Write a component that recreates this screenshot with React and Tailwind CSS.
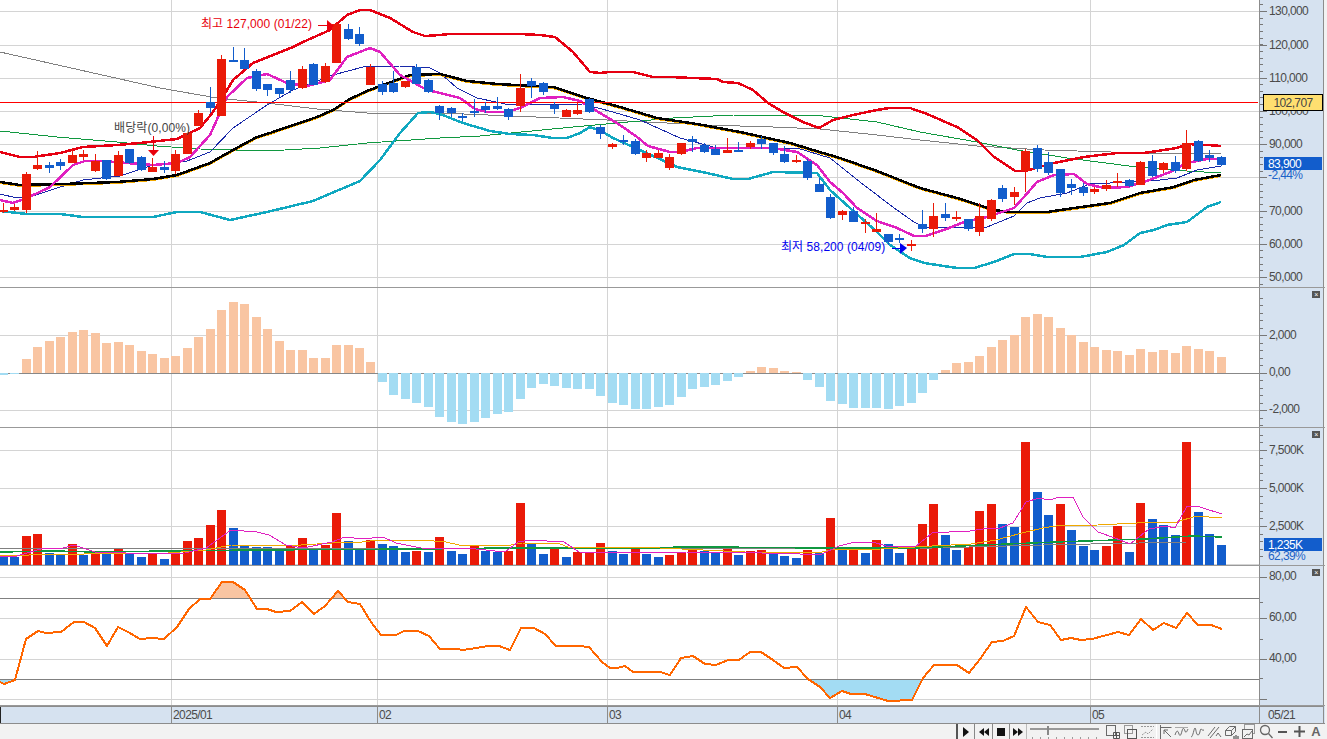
import React from "react";

const COL_X = (i) => 3.3 + 11.49 * i;
const RED = "#ea1a08";
const BLUE = "#125dcc";
const MONTH_X = [171, 377, 607, 837, 1090];

// [wickTop, bodyTop, bodyBottom, wickBottom, colour]
const CANDLES = [
  [203,210,212,213,"r"],[204,207,210,211,"r"],[172,174,210,213,"r"],[151,165,169,170,"r"],[162,165,168,173,"b"],
  [159,162,166,170,"b"],[148,155,163,163,"r"],[150,154,157,160,"r"],[154,161,171,172,"r"],[160,160,179,180,"b"],
  [151,155,176,176,"r"],[149,149,163,164,"b"],[156,157,170,171,"b"],[158,167,172,172,"r"],[161,167,170,173,"b"],
  [150,154,171,174,"r"],[133,133,154,154,"r"],[110,113,126,126,"r"],[87,102,108,113,"b"],[55,59,116,116,"r"],
  [47,60,62,62,"b"],[48,60,69,69,"b"],[69,71,89,91,"b"],[84,84,90,96,"b"],[88,88,94,97,"b"],
  [71,80,90,93,"b"],[66,69,88,89,"r"],[63,64,85,85,"b"],[63,66,82,83,"r"],[22,24,63,63,"r"],
  [24,29,39,40,"b"],[27,34,44,46,"b"],[64,67,85,85,"r"],[81,84,92,95,"b"],[71,83,92,93,"b"],
  [81,81,87,88,"r"],[64,67,84,84,"b"],[79,80,92,93,"b"],[105,106,113,120,"b"],[107,108,113,117,"b"],
  [113,116,117,121,"b"],[99,111,113,117,"b"],[102,106,110,113,"b"],[97,106,109,110,"b"],[108,109,117,120,"b"],
  [74,88,106,112,"r"],[78,81,86,98,"b"],[82,83,92,95,"b"],[102,105,109,114,"b"],[109,110,117,117,"r"],
  [103,110,114,115,"r"],[98,99,112,113,"b"],[125,127,134,139,"b"],[143,144,147,149,"r"],[135,140,142,145,"b"],
  [139,141,154,155,"b"],[150,153,158,162,"r"],[150,153,158,158,"r"],[154,157,168,170,"r"],[143,143,154,155,"r"],
  [136,139,142,152,"b"],[143,145,152,153,"b"],[145,149,155,155,"b"],[138,150,153,153,"r"],[142,150,151,152,"b"],
  [141,143,147,149,"r"],[136,139,144,149,"b"],[143,143,153,155,"b"],[146,154,162,163,"b"],[155,160,161,163,"r"],
  [159,161,178,180,"b"],[178,184,192,192,"b"],[194,197,218,219,"b"],[210,211,215,220,"r"],[207,211,222,222,"b"],
  [219,222,223,233,"r"],[213,229,232,232,"r"],[234,234,242,245,"b"],[234,238,240,243,"b"],[240,244,245,251,"r"],
  [210,224,229,233,"b"],[203,216,229,237,"r"],[203,214,218,221,"b"],[211,217,219,221,"r"],[219,219,229,231,"b"],
  [203,216,232,236,"r"],[199,200,219,221,"r"],[185,188,199,202,"b"],[187,192,197,205,"r"],[149,151,171,192,"r"],
  [145,148,169,172,"b"],[152,162,173,175,"b"],[169,169,193,197,"b"],[179,184,188,195,"b"],[183,187,193,196,"b"],
  [187,189,192,194,"r"],[180,185,189,191,"r"],[173,181,182,187,"r"],[179,180,186,187,"b"],[161,162,185,185,"r"],
  [155,161,176,177,"b"],[162,163,170,173,"r"],[156,162,171,173,"b"],[130,143,169,171,"r"],[140,141,161,162,"b"],
  [150,155,158,162,"b"],[156,157,165,166,"b"],
];

const UPPER_BAND = [[0,152],[20,157],[33,157],[60,153],[83,147],[117,145],[140,143],[177,139],[200,128],[213,112],[227,90],[233,80],[253,63],[293,47],[303,42],[330,30],[347,15],[360,10],[370,10],[390,18],[413,32],[425,36],[440,35],[450,34],[483,34],[520,34],[540,35],[555,37],[573,52],[590,72],[600,73],[610,72],[633,72],[653,77],[670,77],[693,78],[717,79],[723,82],[738,83],[753,90],[768,103],[783,112],[803,122],[819,128],[833,120],[853,115],[877,110],[889,108],[910,108],[927,114],[957,127],[977,140],[994,157],[1015,171],[1025,171],[1054,163],[1084,157],[1117,153],[1144,153],[1177,148],[1187,144],[1207,145],[1221,146]];
const LOWER_BAND = [[0,211],[27,214],[60,214],[83,217],[153,217],[177,212],[200,212],[230,220],[267,212],[313,201],[360,181],[380,160],[400,133],[418,113],[430,112],[440,114],[463,123],[490,131],[510,134],[533,135],[553,138],[567,138],[580,133],[590,127],[603,132],[613,138],[640,150],[677,167],[707,173],[733,179],[748,179],[773,172],[817,173],[830,190],[850,208],[877,232],[890,245],[910,258],[924,263],[957,268],[974,268],[994,262],[1014,254],[1030,254],[1047,257],[1080,257],[1107,252],[1124,245],[1140,233],[1154,230],[1167,225],[1187,222],[1207,207],[1221,202]];
const MA5 = [[0,200],[13,203],[27,198],[50,187],[73,165],[85,161],[103,161],[127,163],[153,165],[177,163],[190,157],[210,135],[227,97],[247,78],[267,74],[287,83],[307,86],[330,80],[347,57],[370,48],[380,52],[400,75],[427,90],[440,93],[460,98],[475,109],[487,112],[507,112],[520,108],[540,98],[563,97],[580,101],[600,113],[620,125],[637,137],[648,146],[670,152],[680,152],[697,148],[773,148],[797,152],[817,165],[830,182],[843,193],[857,208],[877,221],[897,228],[914,236],[925,236],[944,230],[964,222],[987,217],[1014,208],[1024,197],[1037,182],[1054,175],[1074,174],[1087,184],[1104,188],[1127,187],[1144,182],[1170,172],[1187,163],[1207,159],[1221,159]];
const MA60 = [[0,182],[20,185],[63,184],[117,182],[153,179],[177,175],[210,163],[233,150],[257,137],[270,133],[317,117],[333,110],[350,99],[367,91],[383,85],[410,75],[440,74],[467,81],[497,84],[553,87],[587,98],[620,107],[657,118],[697,124],[740,132],[790,143],[813,150],[840,158],[877,171],[920,188],[957,198],[994,210],[1010,212],[1047,212],[1074,208],[1110,203],[1140,193],[1174,187],[1194,180],[1221,175]];
const MA20 = [[0,194],[17,198],[30,197],[57,188],[83,180],[120,176],[153,165],[187,161],[210,152],[233,128],[267,105],[293,90],[333,75],[363,67],[400,66],[430,68],[440,73],[457,88],[477,98],[510,105],[583,104],[613,112],[640,120],[680,138],[717,148],[797,148],[830,158],[860,182],[877,195],[897,210],[914,222],[924,227],[987,227],[1014,216],[1027,203],[1040,198],[1067,193],[1090,184],[1130,182],[1160,180],[1177,178],[1197,170],[1221,166]];
const MA120 = [[0,131],[57,137],[117,142],[157,146],[200,149],[267,151],[320,148],[367,143],[440,138],[480,136],[573,127],[673,118],[733,115],[823,116],[877,122],[920,132],[977,142],[1017,150],[1067,158],[1137,167],[1187,171],[1221,173]];
const MA240 = [[0,52],[160,88],[217,98],[267,103],[317,109],[367,113],[440,113],[607,120],[707,125],[773,127],[820,129],[877,135],[920,140],[977,146],[1044,150],[1144,153],[1221,153]];

// histogram bar ends, page y
const MACD = [375,374,359,347,341,337,332,330,333,343,342,345,351,354,358,356,348,337,329,310,302,304,317,329,341,350,350,358,358,345,345,348,362,382,395,399,403,407,417,422,424,422,418,414,412,399,388,384,386,388,389,389,396,403,405,409,409,407,405,397,389,387,385,381,377,371,367,368,371,372,380,387,401,404,408,408,408,409,406,403,393,380,370,363,362,356,347,340,335,317,314,317,328,335,342,347,350,351,355,349,352,350,353,346,349,351,357];

// volume bar tops in page y, colour by candle day
const VOL = [[557,"b"],[557,"b"],[536,"r"],[534,"r"],[553,"b"],[555,"b"],[544,"r"],[555,"b"],[553,"r"],[553,"b"],[549,"r"],[553,"b"],[557,"b"],[554,"r"],[559,"b"],[553,"r"],[541,"r"],[538,"r"],[525,"r"],[510,"r"],[528,"b"],[546,"b"],[547,"b"],[547,"b"],[550,"b"],[546,"r"],[538,"r"],[550,"b"],[545,"r"],[513,"r"],[541,"b"],[550,"b"],[540,"r"],[544,"b"],[546,"b"],[552,"b"],[551,"r"],[552,"b"],[537,"r"],[551,"b"],[554,"b"],[546,"r"],[551,"b"],[552,"b"],[551,"r"],[503,"r"],[543,"b"],[554,"b"],[548,"r"],[557,"b"],[552,"r"],[552,"r"],[543,"r"],[551,"b"],[554,"b"],[549,"r"],[554,"b"],[557,"b"],[555,"r"],[553,"r"],[550,"r"],[551,"b"],[552,"b"],[548,"r"],[555,"b"],[551,"r"],[550,"r"],[554,"b"],[556,"b"],[558,"b"],[550,"r"],[553,"b"],[518,"r"],[548,"b"],[547,"r"],[553,"b"],[540,"r"],[544,"b"],[553,"b"],[546,"r"],[524,"r"],[504,"r"],[535,"b"],[550,"b"],[547,"r"],[511,"r"],[504,"r"],[524,"b"],[527,"b"],[442,"r"],[492,"b"],[515,"b"],[504,"r"],[530,"b"],[546,"b"],[550,"b"],[546,"r"],[526,"r"],[552,"b"],[503,"r"],[519,"b"],[525,"b"],[535,"b"],[442,"r"],[512,"b"],[534,"b"],[545,"b"]];

const VOL_MA5 = [[0,556],[17,556],[44,548],[63,548],[74,545],[95,552],[126,553],[152,554],[185,553],[206,548],[231,530],[257,532],[269,535],[286,545],[303,548],[332,542],[345,537],[362,539],[383,537],[396,543],[421,548],[476,549],[505,552],[518,542],[530,540],[564,542],[579,552],[660,553],[686,552],[762,553],[800,554],[822,554],[839,546],[851,543],[873,542],[886,546],[915,547],[932,533],[949,532],[970,531],[983,529],[1000,528],[1013,523],[1026,502],[1039,498],[1049,500],[1060,497],[1073,497],[1083,517],[1098,532],[1115,538],[1130,544],[1149,529],[1166,526],[1175,528],[1187,506],[1200,507],[1222,514]];
const VOL_MA20 = [[0,555],[17,556],[42,554],[84,554],[135,553],[168,553],[206,550],[231,545],[286,546],[332,543],[362,542],[379,540],[421,540],[446,542],[459,545],[511,545],[522,543],[560,544],[568,547],[660,548],[745,552],[822,552],[830,550],[881,549],[932,546],[971,544],[996,540],[1022,533],[1043,528],[1056,526],[1098,525],[1137,523],[1149,522],[1177,522],[1196,516],[1222,518]];
const VOL_MA60 = [[0,552],[55,551],[93,552],[168,551],[253,550],[421,549],[505,548],[660,548],[677,547],[711,547],[822,548],[915,548],[983,545],[1056,542],[1145,539],[1192,536],[1222,537]];
const VOL_MA120 = [[0,548],[168,549],[421,548],[660,548],[830,549],[932,548],[1043,545],[1187,542],[1222,542]];

const RSI = [[0,682],[4,684],[15,680],[26,639],[38,631],[46,633],[61,632],[74,622],[84,622],[95,628],[107,646],[118,627],[128,632],[140,639],[152,638],[164,639],[177,627],[189,609],[200,599],[210,599],[222,582],[233,582],[245,590],[257,609],[267,609],[276,612],[290,611],[302,602],[314,614],[325,606],[338,591],[348,602],[360,604],[371,622],[381,635],[396,635],[404,631],[418,631],[429,636],[440,649],[457,649],[463,650],[476,648],[488,646],[499,646],[510,650],[521,628],[534,628],[545,634],[556,646],[579,646],[589,647],[602,662],[610,668],[617,668],[625,666],[633,672],[660,672],[670,675],[681,658],[693,656],[705,664],[716,665],[728,660],[739,660],[750,652],[761,652],[773,660],[784,668],[797,667],[808,679],[820,687],[830,698],[842,691],[851,694],[865,694],[888,701],[912,700],[923,678],[934,665],[957,665],[969,673],[980,659],[992,642],[1003,641],[1014,636],[1026,607],[1038,622],[1050,625],[1061,640],[1071,638],[1081,640],[1092,639],[1107,635],[1118,632],[1129,635],[1141,619],[1153,630],[1164,623],[1176,628],[1187,613],[1198,625],[1211,625],[1222,629]];

const toPts = (a) => a.map((p) => p.join(",")).join(" ");

function Line({ pts, color, width = 1, dy = 0 }) {
  return (
    <polyline
      points={toPts(pts.map(([x, y]) => [x, y + dy]))}
      fill="none"
      stroke={color}
      strokeWidth={width}
      strokeLinejoin="round"
      shapeRendering="crispEdges"
    />
  );
}

function Grid({ top, height, rows }) {
  return (
    <g shapeRendering="crispEdges">
      {rows.map((y) => (
        <rect key={y} x={0} y={y} width={1259} height={1} fill="#d4d4d4" />
      ))}
      {MONTH_X.map((x) => (
        <rect key={x} x={x} y={top} width={1} height={height} fill="#d4d4d4" />
      ))}
    </g>
  );
}

function CloseBox() {
  return (
    <div className="absolute right-[3px] top-[3px] flex h-[7px] w-[8px] items-center justify-center bg-[#555] text-[7px] leading-none text-white">
      ×
    </div>
  );
}

function AxisLabel({ y, color = "text-[#4a4a4a]", children }) {
  return (
    <span
      className={`absolute left-[9px] leading-[14px] whitespace-nowrap ${color}`}
      style={{ top: y - 7 }}
    >
      {children}
    </span>
  );
}

function Pane({ top, height, rows, close, ticks, labels, children, overlay, axisExtra }) {
  return (
    <div className="flex border-b border-[#999]" style={{ height: height + 1 }}>
      <div className="relative w-[1259px] overflow-hidden bg-white">
        <svg width="1259" height={height} viewBox={`0 ${top} 1259 ${height}`} className="block">
          <Grid top={top} height={height} rows={rows} />
          {children}
        </svg>
        {overlay}
      </div>
      <div className="relative w-[65px] overflow-hidden border-x border-x-[#8c8c8c] bg-[#d6e2f0] text-[12px] tracking-[-0.6px]">
        <svg width="10" height={height} viewBox={`0 ${top} 10 ${height}`} className="absolute left-0 top-0" shapeRendering="crispEdges">
          {ticks.map(([y, major]) => (
            <rect key={y} x={0} y={y} width={major ? 7 : 3} height={1} fill="#777" />
          ))}
        </svg>
        {labels.map(([y, text]) => (
          <AxisLabel key={text} y={y - top}>{text}</AxisLabel>
        ))}
        {close && <CloseBox />}
        {axisExtra}
      </div>
    </div>
  );
}

function makeTicks(majors, step, count, from, to) {
  const out = [];
  const start = majors[0];
  for (let y = start - step * count; y < to; y += step) {
    if (y < from) continue;
    out.push([Math.round(y), false]);
  }
  return out.concat(majors.map((y) => [y, true]));
}

function PriceChart() {
  const ticks = makeTicks([11, 45, 78, 111, 144, 177, 211, 244, 277], 6.65, 1, 0, 287);
  const labels = [[11,"130,000"],[45,"120,000"],[78,"110,000"],[111,"100,000"],[144,"90,000"],[211,"70,000"],[244,"60,000"],[277,"50,000"]];
  return (
    <Pane
      top={0}
      height={287}
      rows={[11, 45, 78, 111, 144, 177, 211, 244, 277]}
      ticks={ticks}
      labels={labels}
      overlay={
        <>
          <span className="absolute left-[201px] top-[17px] text-[12px] leading-[14px] tracking-[0.05px] text-[#e8000b] whitespace-nowrap">최고 127,000 (01/22)</span>
          <span className="absolute left-[114px] top-[121px] text-[12px] leading-[14px] tracking-[0.1px] text-[#444] whitespace-nowrap">배당락(0,00%)</span>
          <span className="absolute left-[781px] top-[240px] text-[12px] leading-[14px] tracking-[0.05px] text-[#0000f0] whitespace-nowrap">최저 58,200 (04/09)</span>
        </>
      }
      axisExtra={
        <>
          <div className="absolute left-[3px] top-[94px] flex h-[17px] w-[60px] items-center justify-center border border-black bg-[#ffdf70] text-[#444]">102,707</div>
          <div className="absolute left-[4px] top-[157px] flex h-[13px] w-[58px] items-center bg-[#125dcc] pl-[4px] text-white">83,900</div>
          <span className="absolute left-[8px] top-[168px] leading-[14px] text-[#1c62c8]">-2,44%</span>
        </>
      }
    >
      <Line pts={MA240} color="#808080" />
      <Line pts={MA120} color="#109840" />
      <Line pts={MA20} color="#1828a8" />
      <Line pts={MA60} color="#f0a800" width={2} dy={1} />
      <Line pts={MA60} color="#000000" width={2.5} />
      <Line pts={LOWER_BAND} color="#10a8c0" width={2.5} />
      <Line pts={UPPER_BAND} color="#e60012" width={2.5} />
      <Line pts={MA5} color="#e020c0" width={2.5} />
      <rect x={0} y={102} width={1258} height={1} fill="#ff0000" shapeRendering="crispEdges" />
      <g shapeRendering="crispEdges">
        {CANDLES.map(([hi, top, bot, lo, c], i) => {
          const left = Math.round(COL_X(i) - 4.5);
          const fill = c === "r" ? RED : BLUE;
          return (
            <g key={i} fill={fill}>
              <rect x={left + 4} y={hi} width={1} height={lo - hi} />
              <rect x={left} y={top} width={9} height={Math.max(2, bot - top)} />
            </g>
          );
        })}
      </g>
      {/* high / ex-dividend / low markers */}
      <path d="M318 25.5H328" stroke="#e8000b" />
      <polygon points="327,20 334,26 327,31" fill="#e8000b" />
      <path d="M153.5 136V150" stroke="#e8000b" />
      <polygon points="148,150 159,150 153.5,156" fill="#e8000b" />
      <path d="M892 248.5H901" stroke="#0000f0" />
      <polygon points="900,243 907,248 900,254" fill="#0000f0" />
    </Pane>
  );
}

function MacdChart() {
  const top = 288;
  const zero = 373;
  return (
    <Pane
      top={top}
      height={139}
      rows={[335, 410]}
      close
      ticks={makeTicks([335, 373, 410], 7.5, 5, top + 1, 426)}
      labels={[[335,"2,000"],[372,"0,00"],[409,"-2,000"]]}
    >
      <rect x={0} y={zero} width={1259} height={1} fill="#888" shapeRendering="crispEdges" />
      <g shapeRendering="crispEdges">
        {MACD.map((y, i) => {
          const left = Math.round(COL_X(i) - 4.5);
          const up = y < zero;
          return (
            <rect key={i} x={left} y={up ? y : zero} width={9} height={Math.abs(zero - y)} fill={up ? "#f9c5a2" : "#a3dcf3"} />
          );
        })}
      </g>
    </Pane>
  );
}

function VolumeChart() {
  const top = 428;
  return (
    <Pane
      top={top}
      height={137}
      rows={[450, 488, 526, 564]}
      close
      ticks={makeTicks([450, 488, 526], 7.6, 2, top + 1, 562)}
      labels={[[450,"7,500K"],[488,"5,000K"],[526,"2,500K"]]}
      axisExtra={
        <>
          <div className="absolute left-[4px] top-[110px] flex h-[13px] w-[58px] items-center bg-[#125dcc] pl-[4px] text-white">1,235K</div>
          <span className="absolute left-[8px] top-[121px] leading-[14px] text-[#1c62c8]">62,39%</span>
        </>
      }
    >
      <g shapeRendering="crispEdges">
        {VOL.map(([y, c], i) => (
          <rect key={i} x={Math.round(COL_X(i) - 4.5)} y={y} width={9} height={565 - y} fill={c === "r" ? RED : BLUE} />
        ))}
      </g>
      <Line pts={VOL_MA120} color="#808080" />
      <Line pts={VOL_MA60} color="#109840" width={1.5} />
      <Line pts={VOL_MA20} color="#f0a800" />
      <Line pts={VOL_MA5} color="#e020c0" />
    </Pane>
  );
}

function RsiChart() {
  const top = 566;
  const closed = (y) => toPts([[RSI[0][0], y], ...RSI, [RSI[RSI.length - 1][0], y]]);
  return (
    <Pane
      top={top}
      height={139}
      rows={[577, 618, 659, 699]}
      close
      ticks={[[577,true],[618,true],[659,true],[699,true],[602,false],[639,false],[678,false]]}
      labels={[[576,"80,00"],[617,"60,00"],[658,"40,00"]]}
    >
      <defs>
        <clipPath id="over"><rect x="0" y="566" width="1259" height="32" /></clipPath>
        <clipPath id="under"><rect x="0" y="680" width="1259" height="25" /></clipPath>
      </defs>
      <polygon points={closed(598)} fill="#f9c5a2" clipPath="url(#over)" />
      <polygon points={closed(679)} fill="#a3dcf3" clipPath="url(#under)" />
      <g shapeRendering="crispEdges">
        <rect x={0} y={598} width={1259} height={1} fill="#808080" />
        <rect x={0} y={679} width={1259} height={1} fill="#808080" />
      </g>
      <Line pts={RSI} color="#ff6600" width={2} />
    </Pane>
  );
}

function TimeAxis() {
  const months = [[171, "2025/01"], [377, "02"], [607, "03"], [837, "04"], [1090, "05"]];
  return (
    <div className="flex h-[18px] border-b border-[#8c8c8c] bg-[#d6e2f0] text-[12px] tracking-[-0.6px] text-[#4a4a4a]">
      <div className="relative w-[1259px] border-t border-[#8c8c8c]">
        <div className="absolute left-0 top-0 h-full w-px bg-[#222]" />
        {months.map(([x, label]) => (
          <span key={x} className="absolute top-0 h-full border-l border-[#8c8c8c] pl-[1px] leading-[16px]" style={{ left: x }}>
            {label}
          </span>
        ))}
      </div>
      <div className="w-[65px] border-x border-t border-[#8c8c8c] pl-[8px] leading-[16px]">05/21</div>
    </div>
  );
}

function Tb({ w, children, className = "" }) {
  return (
    <div className={`flex h-full shrink-0 items-center justify-center ${className}`} style={{ width: w }}>
      {children}
    </div>
  );
}

function Toolbar() {
  const s = { fill: "none", stroke: "#6a6a6a", strokeWidth: 1 };
  return (
    <div className="flex h-[15px] justify-end overflow-hidden bg-[#f2f2f2] pr-[3px]">
      <Tb w={18} className="border-l-2 border-[#555]">
        <svg width="8" height="10"><polygon points="1,0 7,5 1,10" fill="#111" /></svg>
      </Tb>
      <Tb w={18} className="border-l border-[#888]">
        <svg width="10" height="10"><polygon points="5,1 0,5 5,9" fill="#111" /><polygon points="10,1 5,5 10,9" fill="#111" /></svg>
      </Tb>
      <Tb w={17} className="border-l border-[#888]">
        <div className="h-[8px] w-[8px] bg-[#111]" />
      </Tb>
      <Tb w={17} className="border-l border-[#888]">
        <svg width="10" height="10"><polygon points="0,1 5,5 0,9" fill="#111" /><polygon points="5,1 10,5 5,9" fill="#111" /></svg>
      </Tb>
      <Tb w={78} className="border-l border-[#bbb]">
        <svg width="72" height="15">
          <rect x="0" y="4" width="69" height="2" fill="#999" />
          <rect x="17" y="2" width="2" height="9" fill="#888" />
          <path d="M2 14H70" stroke="#444" strokeDasharray="1 7" />
        </svg>
      </Tb>
      <Tb w={17}>
        <svg width="15" height="15" {...s}><rect x="1.5" y="1.5" width="9" height="10" /><path d="M8.5 8.5h6v6h-6zM11.5 8.5v6M8.5 11.5h6" stroke="#555" /></svg>
      </Tb>
      <Tb w={18}>
        <svg width="15" height="15" {...s}><rect x="1.5" y="1.5" width="8" height="8" stroke="#999" /><rect x="4.5" y="5.5" width="9" height="9" stroke="#555" /></svg>
      </Tb>
      <Tb w={17}>
        <svg width="15" height="15" {...s}><path d="M1 2.5h13M1 13.5h13M2 11l4-3 2 2 5-5" strokeDasharray="2 1" stroke="#999" /></svg>
      </Tb>
      <Tb w={18} className="border-l border-white">
        <svg width="14" height="15" {...s}><path d="M1.5 1v14M1.5 3.5h11M12 13L5 6M5 6v4M5 6h4" /></svg>
      </Tb>
      <Tb w={15}>
        <svg width="15" height="15" {...s}><path d="M1 11c2-6 3-4 4-1s2 1 3-3 2-3 3 0 2 0 3-2" /><path d="M1 3.5h13" stroke="#aaa" /></svg>
      </Tb>
      <Tb w={17}>
        <svg width="15" height="15" {...s}><path d="M1 13c2 0 3-9 4-9s1 7 3 7 2-6 3-6 1 2 3 1" /></svg>
      </Tb>
      <Tb w={17}>
        <svg width="15" height="15" {...s}><path d="M1 12L8 3M3 14L12 3M9 12l2-3 3 4" /></svg>
      </Tb>
      <Tb w={17}>
        <svg width="15" height="15" {...s}><path d="M1.5 6.5l4-4h6v5l-4 4h-6zM1.5 6.5h6v5M7.5 6.5l4-4" /><path d="M10 15v-3M12 15v-4M14 15v-3" stroke="#333" /></svg>
      </Tb>
      <Tb w={17}>
        <svg width="15" height="15" {...s}><rect x="3.5" y="0.5" width="10" height="9" stroke="#999" /><rect x="1.5" y="5.5" width="10" height="9" fill="#f2f2f2" /><path d="M3 13l3-3 2 1 3-4" /></svg>
      </Tb>
      <Tb w={17}>
        <svg width="14" height="15" fill="none" stroke="#666" strokeWidth="1.3"><circle cx="6" cy="6" r="4.5" /><path d="M9.5 9.5l4 4.5" /></svg>
      </Tb>
      <Tb w={17}><div className="h-[2px] w-[9px] bg-[#555]" /></Tb>
      <Tb w={17}>
        <svg width="11" height="11"><path d="M0 4.5h11v2H0zM4.5 0h2v11h-2z" fill="#555" /></svg>
      </Tb>
      <Tb w={16}><span className="text-[13px] leading-none font-bold text-[#666]">A</span></Tb>
    </div>
  );
}

export default function App() {
  return (
    <div className="h-[739px] w-[1327px] overflow-hidden bg-[#f2f2f2] font-['Liberation_Sans','Noto_Sans_CJK_KR',sans-serif]">
      <div className="w-[1325px]">
        <PriceChart />
        <MacdChart />
        <VolumeChart />
        <RsiChart />
        <TimeAxis />
      </div>
      <Toolbar />
    </div>
  );
}
